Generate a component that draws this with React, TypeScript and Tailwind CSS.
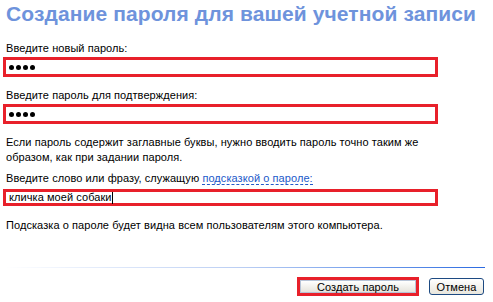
import React from 'react';

const Field: React.FC<{ children: React.ReactNode; tall?: boolean }> = ({ children, tall }) => (
  <div
    className={`w-[435px] ${tall ? 'h-[20px]' : 'h-[17px]'} border-[3px] border-[#e8202a] bg-white flex items-center pl-[3px] text-black`}
  >
    {children}
  </div>
);

const Dots: React.FC = () => (
  <div className="flex gap-[2px]">
    {[0, 1, 2, 3].map((i) => (
      <span key={i} className="w-[5px] h-[5px] rounded-full bg-black" />
    ))}
  </div>
);

const App: React.FC = () => {
  return (
    <div className="w-[493px] h-[302px] bg-white relative overflow-hidden font-['Liberation_Sans',Arial,sans-serif] text-[11px] leading-[14px] tracking-[0.07px] text-black">
      <h1 className="pl-[6px] pt-[2px] text-[21px] leading-[24px] font-bold text-[#6e93dc] tracking-[0.1px]">
        Создание пароля для вашей учетной записи
      </h1>

      <div className="pl-[3px] flex flex-col">
        <div className="mt-[15px] pl-[3px]">Введите новый пароль:</div>
        <div className="mt-[2px]">
          <Field tall>
            <Dots />
          </Field>
        </div>

        <div className="mt-[11px] pl-[3px]">Введите пароль для подтверждения:</div>
        <div className="mt-[2px]">
          <Field tall>
            <Dots />
          </Field>
        </div>

        <div className="mt-[11px] pl-[3px] leading-[15px] w-[430px]">
          Если пароль содержит заглавные буквы, нужно вводить пароль точно таким же образом, как при задании пароля.
        </div>

        <div className="mt-[6px] pl-[3px]">
          Введите слово или фразу, служащую{' '}
          <span className="text-[#2159c9] border-b border-dashed border-[#2159c9]">подсказкой о пароле:</span>
        </div>
        <div className="mt-[4px]">
          <Field>
            <span className="leading-[11px]">кличка моей собаки</span>
            <span className="w-px h-[12px] bg-black" />
          </Field>
        </div>

        <div className="mt-[12px] pl-[3px]">Подсказка о пароле будет видна всем пользователям этого компьютера.</div>
      </div>

      <div className="mt-[35px] ml-[5px] w-[480px] h-px bg-gradient-to-r from-white via-[#b9cdf3] to-[#2b6ae0]" />

      <div className="mt-[9px] pr-[9px] flex justify-end items-start gap-[10px]">
        <div className="border-[3px] border-[#e8202a] w-[122px] h-[19px] flex">
          <button className="flex-1 border border-[#b7c3d6] bg-gradient-to-b from-white to-[#e6e4dc] text-[11px] leading-[12px] text-black">
            Создать пароль
          </button>
        </div>
        <button className="mt-px w-[55px] h-[17px] rounded-[3px] border border-[#1d4a82] bg-gradient-to-b from-white to-[#e8e6dd] text-[11px] leading-[12px] text-black">
          Отмена
        </button>
      </div>
    </div>
  );
};

export default App;
